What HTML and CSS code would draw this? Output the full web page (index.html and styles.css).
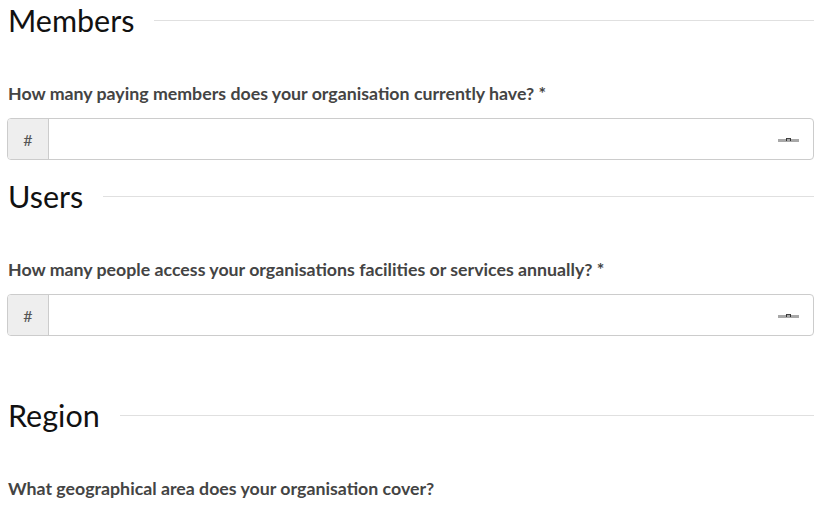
FILE: index.html
```html
<!DOCTYPE html>
<html>
<head>
<meta charset="utf-8">
<link rel="stylesheet" href="styles.css">
</head>
<body>
<div class="form">
  <section class="group">
    <h2 class="legend"><span>Members</span><i class="rule"></i></h2>
    <label class="q">How many paying members does your organisation currently have? *</label>
    <div class="input-group">
      <span class="addon">#</span>
      <div class="field"><span class="spin"><b></b></span></div>
    </div>
  </section>
  <section class="group">
    <h2 class="legend"><span>Users</span><i class="rule"></i></h2>
    <label class="q">How many people access your organisations facilities or services annually? *</label>
    <div class="input-group">
      <span class="addon">#</span>
      <div class="field"><span class="spin"><b></b></span></div>
    </div>
  </section>
  <section class="group spaced">
    <h2 class="legend"><span>Region</span><i class="rule"></i></h2>
    <label class="q">What geographical area does your organisation cover?</label>
  </section>
</div>
</body>
</html>
```
FILE: styles.css
```css
html, body {
  margin: 0;
  padding: 0;
  background: #fff;
}
body {
  font-family: Lato, "Open Sans", sans-serif;
  overflow: hidden;
}
.form {
  width: 807px;
  padding-left: 7px;
  display: flex;
  flex-direction: column;
}
.group {
  display: flex;
  flex-direction: column;
  margin-bottom: 16px;
}
.group.spaced {
  margin-top: 43px;
}
.legend {
  display: flex;
  align-items: center;
  height: 40px;
  margin: 0;
  font-size: 30.5px;
  font-weight: 400;
  color: #111;
  line-height: 40px;
  padding-left: 1px;
}
.rule {
  flex: 1;
  height: 1px;
  background: #e0e0e0;
  margin-left: 20px;
}
.q {
  display: block;
  margin-top: 43px;
  font-size: 17.75px;
  font-weight: 700;
  line-height: 20px;
  color: #444;
  padding-left: 1px;
}
.input-group {
  margin-top: 15px;
  display: flex;
  height: 42px;
  border: 1px solid #ccc;
  border-radius: 4px;
  box-sizing: border-box;
  overflow: hidden;
}
.addon {
  width: 40px;
  background: #eee;
  border-right: 1px solid #ccc;
  display: flex;
  align-items: center;
  justify-content: center;
  font-size: 16px;
  color: #555;
}
.field {
  flex: 1;
  display: flex;
  align-items: center;
  justify-content: flex-end;
  padding-right: 14px;
}
.spin {
  position: relative;
  width: 21px;
  height: 3px;
  background: #a8a8a8;
  margin-top: 2px;
}
.spin b {
  position: absolute;
  left: 8px;
  top: -1px;
  width: 5px;
  height: 3px;
  border-top: 1px solid #444;
  border-left: 1px solid #333;
  border-right: 1px solid #333;
  box-sizing: border-box;
}
```
